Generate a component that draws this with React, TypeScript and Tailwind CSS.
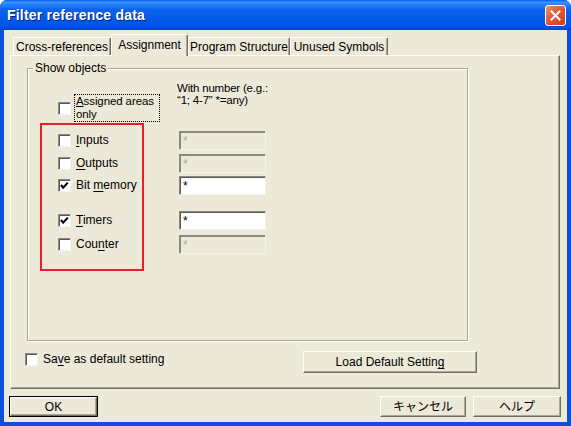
import React from "react";

const Check = ({ checked }: { checked?: boolean }) => (
  <span className="relative block w-[13px] h-[13px] shrink-0 bg-white border border-t-[#8C8A80] border-l-[#8C8A80] border-r-[#F4F3EE] border-b-[#F4F3EE] shadow-[inset_1px_1px_0_#5B5A52]">
    {checked && (
      <svg className="absolute left-0 top-0" width="11" height="11" viewBox="0 0 11 11">
        <path d="M2 5 L4.2 7.6 L8.8 2.6" stroke="#000" strokeWidth="2.1" fill="none" />
      </svg>
    )}
  </span>
);

const Field = ({ enabled }: { enabled?: boolean }) => (
  <div
    className={
      enabled
        ? "w-[87px] h-[19px] flex items-center pl-[3px] leading-[12px] bg-white text-black border border-t-[#8C8A80] border-l-[#8C8A80] border-r-[#F4F3EE] border-b-[#F4F3EE] shadow-[inset_1px_1px_0_#5B5A52]"
        : "w-[87px] h-[19px] flex items-center pl-[3px] leading-[12px] bg-[#ECE9D8] text-[#ACA899] border border-t-[#8C8A80] border-l-[#8C8A80] border-r-[#F4F3EE] border-b-[#F4F3EE] shadow-[inset_1px_1px_0_#8C8A80]"
    }
  >
    *
  </div>
);

const U = ({ children }: { children: React.ReactNode }) => (
  <span className="underline underline-offset-[2px] decoration-1">{children}</span>
);

const Row = ({
  label,
  checked,
  enabled,
  className,
}: {
  label: React.ReactNode;
  checked?: boolean;
  enabled?: boolean;
  className: string;
}) => (
  <div className={className}>
    <div className="w-[151px] pl-[30px] flex items-center gap-[5px]">
      <Check checked={checked} />
      <span className="leading-[13px]">{label}</span>
    </div>
    <Field enabled={enabled} />
  </div>
);

const btn =
  "flex items-center justify-center bg-[#ECE9D8] border border-t-white border-l-white border-r-[#716F64] border-b-[#716F64] shadow-[inset_-1px_-1px_0_#ACA899]";

export default function App() {
  return (
    <div className="w-[571px] h-[426px] flex flex-col bg-[#0A4FDD] rounded-t-[7px] overflow-hidden font-['Liberation_Sans','Noto_Sans_CJK_JP',sans-serif] text-[12px] text-black">
      {/* Title bar */}
      <div className="h-[30px] shrink-0 flex items-center justify-between pl-[7px] pr-[5px] bg-[linear-gradient(180deg,#0058EE_0%,#3D95FF_7%,#2A82F8_14%,#0A62EC_32%,#0058E6_70%,#0052E2_90%,#0043CC_100%)]">
        <span className="text-white font-bold text-[14px] tracking-[0.2px] [text-shadow:1px_1px_0_#0A1E70]">
          Filter reference data
        </span>
        <div className="w-[21px] h-[21px] rounded-[3px] border border-white bg-[linear-gradient(135deg,#F0906F_0%,#E3573A_45%,#CC3E1E_100%)] flex items-center justify-center">
          <svg width="11" height="11" viewBox="0 0 11 11">
            <path d="M1.5 1.5 L9.5 9.5 M9.5 1.5 L1.5 9.5" stroke="#fff" strokeWidth="2" strokeLinecap="square" />
          </svg>
        </div>
      </div>

      {/* Body */}
      <div className="flex-1 mx-[4px] mb-[4px] bg-[#ECE9D8] flex flex-col">
        {/* Tabs */}
        <div className="pt-[4px] pl-[6px]">
          <div className="h-[21px] flex items-end pl-[3px]">
            <div className="w-[98px] h-[18px] flex items-center justify-center border-l border-t border-l-white border-t-white border-r border-r-[#716F64] rounded-t-[2px] shadow-[inset_-1px_0_0_#ACA899]">
              Cross-references
            </div>
            <div className="relative z-10 w-[77px] h-[22px] -mb-[1px] pb-[2px] flex items-center justify-center bg-[#ECE9D8] border-l border-t border-l-white border-t-white border-r border-r-[#716F64] rounded-t-[2px] shadow-[inset_-1px_0_0_#ACA899]">
              Assignment
            </div>
            <div className="w-[102px] h-[18px] flex items-center justify-center border-l border-t border-l-white border-t-white border-r border-r-[#716F64] rounded-t-[2px] shadow-[inset_-1px_0_0_#ACA899]">
              Program Structure
            </div>
            <div className="w-[98px] h-[18px] flex items-center justify-center border-l border-t border-l-white border-t-white border-r border-r-[#716F64] rounded-t-[2px] shadow-[inset_-1px_0_0_#ACA899]">
              Unused Symbols
            </div>
          </div>

          {/* Tab panel */}
          <div className="w-[550px] h-[334px] border border-t-white border-l-white border-r-[#716F64] border-b-[#716F64] shadow-[inset_-1px_-1px_0_#ACA899] pt-[12px] flex flex-col">
            {/* Group box */}
            <div className="relative ml-[16px] w-[441px] h-[273px] border border-[#A7A69A] shadow-[1px_1px_0_white,inset_1px_1px_0_white]">
              <span className="absolute left-[5px] -top-[8px] px-[2px] bg-[#ECE9D8] leading-[14px]">
                Show objects
              </span>

              {/* header */}
              <div className="h-[62px] flex">
                <div className="w-[149px] pl-[30px] pt-[25px]">
                  <div className="flex items-center gap-[3px]">
                    <Check />
                    <span className="w-[86px] border border-dotted border-black px-[1px] text-[11.5px] leading-[13px] tracking-[-0.1px]">
                      <span className="underline underline-offset-[1px] decoration-1">A</span>ssigned areas only
                    </span>
                  </div>
                </div>
                <div className="pt-[13px] text-[11.5px] leading-[12px] tracking-[-0.2px]">
                  <div>With number (e.g.:</div>
                  <div>“1; 4-7” *=any)</div>
                </div>
              </div>

              <Row className="flex items-center h-[19px]" label={<><U>I</U>nputs</>} />
              <Row className="flex items-center h-[19px] mt-[4px]" label={<><U>O</U>utputs</>} />
              <Row className="flex items-center h-[19px] mt-[3px]" checked enabled label={<>Bit <U>m</U>emory</>} />
              <Row className="flex items-center h-[19px] mt-[16px]" checked enabled label={<><U>T</U>imers</>} />
              <Row className="flex items-center h-[19px] mt-[5px]" label={<>Cou<U>n</U>ter</>} />

              {/* red annotation */}
              <div className="absolute left-[12px] top-[54px] w-[104px] h-[148px] border-2 border-[#E5202A]" />
            </div>

            {/* bottom row */}
            <div className="mt-[10px] h-[22px] flex items-start">
              <div className="w-[292px] pl-[14px] pt-[2px] flex items-center gap-[5px]">
                <Check />
                <span className="leading-[13px]">
                  Sa<U>v</U>e as default setting
                </span>
              </div>
              <div className={btn + " w-[174px] h-[22px]"}>
                <span>
                  Load Default Settin<U>g</U>
                </span>
              </div>
            </div>
          </div>
        </div>

        {/* Dialog buttons */}
        <div className="mt-[7px] flex items-center">
          <div className="ml-[5px] w-[89px] h-[21px] border border-black">
            <div className={btn + " w-full h-full"}>OK</div>
          </div>
          <div className={btn + " ml-auto w-[86px] h-[21px]"}>キャンセル</div>
          <div className={btn + " ml-[7px] mr-[6px] w-[88px] h-[21px]"}>ヘルプ</div>
        </div>
      </div>
    </div>
  );
}
